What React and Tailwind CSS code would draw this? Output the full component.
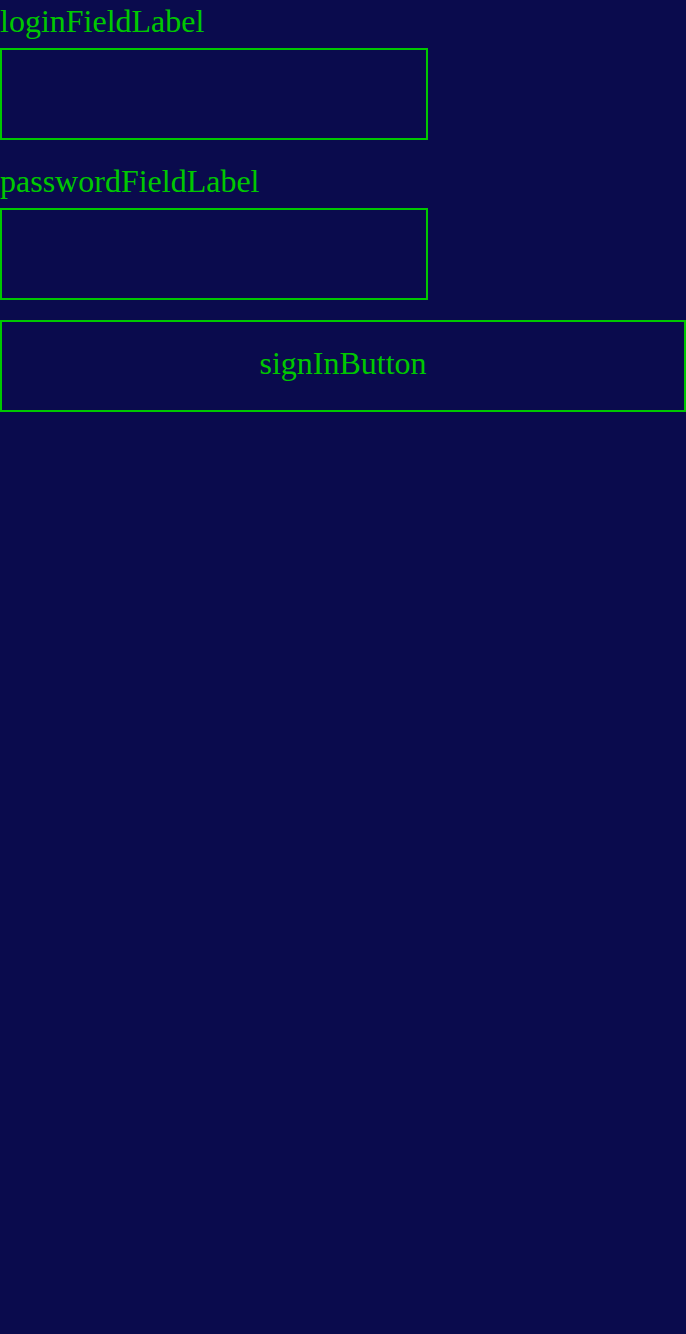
import React from "react";

const Field = ({ label, type }) => (
    <div className="flex flex-col">
        <label className="block text-[32px] leading-[43px] mb-[5px]">{label}</label>
        <input
            type={type}
            className="w-[428px] h-[92px] border-2 border-[#00c800] bg-transparent outline-none px-2 text-[32px] text-[#00c800]"
        />
    </div>
);

export default function App() {
    return (
        <div
            className="min-h-[1334px] w-full bg-[#0a0b4d] text-[#00c800] flex flex-col gap-[20px]"
            style={{ fontFamily: '"Liberation Serif", "Times New Roman", serif' }}
        >
            <Field label="loginFieldLabel" type="text" />
            <Field label="passwordFieldLabel" type="password" />
            <button className="w-full h-[92px] border-2 border-[#00c800] bg-transparent text-[32px] text-[#00c800] flex items-center justify-center pb-[6px]">
                signInButton
            </button>
        </div>
    );
}
